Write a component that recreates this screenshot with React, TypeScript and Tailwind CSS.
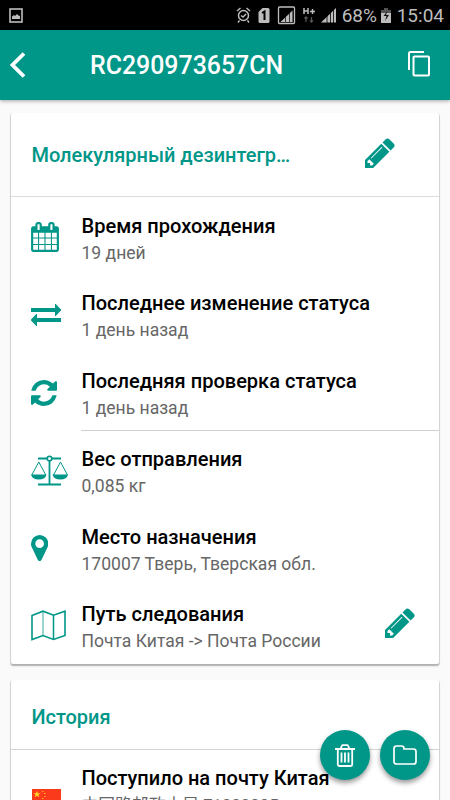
import React from 'react';

const PencilIcon = () => (
  <svg viewBox="128 128 1536 1536" className="h-[30px] w-[30px] fill-current">
    <path d="M491 1536l91-91-235-235-91 91v107h128v128h107zm523-928q0-22-22-22-10 0-17 7l-542 542q-7 7-7 17 0 22 22 22 10 0 17-7l542-542q7-7 7-17zm-54-192l416 416-832 832h-416v-416zm683 96q0 53-37 90l-166 166-416-416 166-165q36-38 90-38 53 0 91 38l235 234q37 39 37 91z" />
  </svg>
);

const CalendarIcon = () => (
  <svg viewBox="64 0 1664 1792" className="h-[30px] w-7 fill-current">
    <path d="M192 1664h288v-288h-288v288zm352 0h320v-288h-320v288zm-352-352h288v-320h-288v320zm352 0h320v-320h-320v320zm-352-384h288v-288h-288v288zm736 736h320v-288h-320v288zm-384-736h320v-288h-320v288zm768 736h288v-288h-288v288zm-384-352h320v-320h-320v320zm-352-864v-288q0-13-9.5-22.5t-22.5-9.5h-64q-13 0-22.5 9.5t-9.5 22.5v288q0 13 9.5 22.5t22.5 9.5h64q13 0 22.5-9.5t9.5-22.5zm736 864h288v-320h-288v320zm-384-384h320v-288h-320v288zm384 0h288v-288h-288v288zm32-480v-288q0-13-9.5-22.5t-22.5-9.5h-64q-13 0-22.5 9.5t-9.5 22.5v288q0 13 9.5 22.5t22.5 9.5h64q13 0 22.5-9.5t9.5-22.5zm384-64v1280q0 52-38 90t-90 38h-1408q-52 0-90-38t-38-90v-1280q0-52 38-90t90-38h128v-96q0-66 47-113t113-47h64q66 0 113 47t47 113v96h384v-96q0-66 47-113t113-47h64q66 0 113 47t47 113v96h128q52 0 90 38t38 90z" />
  </svg>
);

const ExchangeIcon = () => (
  <svg viewBox="0 0 30 24" className="h-6 w-[30px] fill-current">
    <path d="M0 5h24V1.2q0-.8.7-.3L30 6.4q.4.5 0 1l-5.3 5.5q-.7.4-.7-.4V9H0z" />
    <path d="M30 15H6v-3.8q0-.8-.7-.3L0 16.4q-.4.5 0 1l5.3 5.5q.7.4.7-.4V19h24z" />
  </svg>
);

const RefreshIcon = () => (
  <svg viewBox="128 128 1536 1536" className="mt-0.5 h-[26px] w-[26px] fill-current">
    <path d="M1639 1056q0 5-1 7-64 268-268 434.5t-478 166.5q-146 0-282.5-55t-243.5-157l-129 129q-19 19-45 19t-45-19-19-45v-448q0-26 19-45t45-19h448q26 0 45 19t19 45-19 45l-137 137q71 66 161 102t187 36q134 0 250-65t186-179q11-17 53-117 8-23 30-23h192q13 0 22.5 9.5t9.5 22.5zm25-800v448q0 26-19 45t-45 19h-448q-26 0-45-19t-19-45 19-45l138-138q-148-137-349-137-134 0-250 65t-186 179q-11 17-53 117-8 23-30 23h-199q-13 0-22.5-9.5t-9.5-22.5v-7q65-268 270-434.5t480-166.5q146 0 284 55.5t245 156.5l130-129q19-19 45-19t45 19 19 45z" />
  </svg>
);

const ScaleIcon = () => (
  <svg viewBox="0 0 37 31" className="h-[31px] w-[37px]" fill="none" stroke="currentColor">
    <path d="M7 3.5h9M21 3.5h9M18.5 6v23M7 29.5h23" strokeWidth="1.8" />
    <circle cx="18.5" cy="3.5" r="2.3" strokeWidth="1.6" />
    <path d="M.8 20L7.8 7l7 13M22.5 20l7-13 7 13" strokeWidth="1" />
    <path d="M0 19.5h15.5q-1 5-7.7 5T0 19.5zM21.5 19.5H37q-1 5-7.7 5t-7.8-5z" fill="currentColor" stroke="none" />
  </svg>
);

const MarkerIcon = () => (
  <svg viewBox="384 128 1024 1536" className="h-[26px] w-[17.3px] fill-current">
    <path d="M1152 640q0-106-75-181t-181-75-181 75-75 181 75 181 181 75 181-75 75-181zm256 0q0 109-33 179l-364 774q-16 33-47.5 52t-67.5 19-67.5-19-46.5-52l-365-774q-33-70-33-179 0-212 150-362t362-150 362 150 150 362z" />
  </svg>
);

const MapIcon = () => (
  <svg viewBox="0 0 35 31" className="h-[31px] w-[35px]" fill="none" stroke="currentColor">
    <path d="M1 5.5L12 1.2l10.5 4L34 1.2v24.3l-11.5 4-10.5-4-11 4z" strokeWidth="1.6" />
    <path d="M12 1.2v24.3" strokeWidth=".8" />
    <path d="M22.5 5v24.5" strokeWidth="1.5" />
  </svg>
);

interface Item {
  title: string;
  text: string;
  icon: React.ReactNode;
  editable?: boolean;
}

const timing: Item[] = [
  { title: 'Время прохождения', text: '19 дней', icon: <CalendarIcon /> },
  { title: 'Последнее изменение статуса', text: '1 день назад', icon: <ExchangeIcon /> },
  { title: 'Последняя проверка статуса', text: '1 день назад', icon: <RefreshIcon /> },
];

const details: Item[] = [
  { title: 'Вес отправления', text: '0,085 кг', icon: <ScaleIcon /> },
  { title: 'Место назначения', text: '170007 Тверь, Тверская обл.', icon: <MarkerIcon /> },
  { title: 'Путь следования', text: 'Почта Китая -> Почта России', icon: <MapIcon />, editable: true },
];

const Row = ({ item }: { item: Item }) => (
  <div className="flex h-[77.6px] pl-5">
    <div className="flex h-20 w-[50.5px] shrink-0 items-center">{item.icon}</div>
    <div className="min-w-0 flex-1 whitespace-nowrap pt-[15.5px]">
      <div className="text-[20.05px] font-medium leading-[27px] text-black">{item.title}</div>
      <div className="text-[17.55px] leading-[27px] text-[#666]">{item.text}</div>
    </div>
    {item.editable && (
      <div className="mr-6 flex h-[75px] items-center">
        <PencilIcon />
      </div>
    )}
  </div>
);

const StatusBar = () => (
  <div className="flex h-[30px] items-center bg-black pl-[9px] pr-[6px] text-[#bdbdbd]">
    <svg viewBox="0 0 14 15" className="h-[15px] w-3.5" fill="none" stroke="currentColor">
      <rect x="1" y="1" width="12" height="13" strokeWidth="1.6" />
      <path d="M3 11V8.5L5 7l1 1 2-2 1.5 1.5L11 8v3z" fill="currentColor" stroke="none" />
    </svg>
    <svg viewBox="0 0 110 20" className="ml-auto h-5 w-[110px] shrink-0" fill="none" stroke="currentColor">
      <circle cx="7.5" cy="10.5" r="5" strokeWidth="1.5" />
      <path d="M1 6l3.5-3M14 6l-3.5-3M3.5 15.5L2 17.5M11.5 15.5l1.5 2M5 10.5l2 1.5 3-3" strokeWidth="1.4" />
      <path d="M26.5 3H32q1.5 0 1.5 1.5v12q0 1.5-1.5 1.5h-8q-1.5 0-1.5-1.5V7z" fill="currentColor" stroke="none" />
      <path d="M26 8l2.5-1.5V15" stroke="#000" strokeWidth="2" />
      <rect x="42.5" y="2" width="16" height="16.5" rx="1" strokeWidth="1.3" />
      <path d="M44.5 17L56.5 5.5V17z" fill="currentColor" stroke="none" />
      <path d="M49.5 9v8M53.5 6v11" stroke="#000" strokeWidth=".7" />
      <path d="M68 3v6M72 3v6M68 6h4M74 6.5h5M76.5 4v5" strokeWidth="1.5" />
      <path d="M70 17v-5M68.5 13.5L70 12l1.5 1.5M75.5 12v5M74 15.5l1.5 1.5 1.5-1.5" stroke="#555" strokeWidth="1.3" />
      <path d="M85 17.5L100 3v14.5z" fill="currentColor" stroke="none" />
      <path d="M91 10v8M94.5 7v11M97.5 4v14" stroke="#000" strokeWidth=".8" />
    </svg>
    <span className="-ml-1 mt-0.5 w-[37px] shrink-0 whitespace-nowrap text-[19px]">68%</span>
    <svg viewBox="0 0 10 16" className="ml-[2px] mr-[6px] h-4 w-2.5 shrink-0">
      <path d="M3 1h4v2h3v3H0V3h3z" fill="#555" />
      <path d="M0 6h10v10H0z" fill="currentColor" />
      <path d="M6.5 4l-4 5h3l-1.5 5 4-6H5z" fill="#111" />
    </svg>
    <span className="mt-0.5 shrink-0 text-[19px]">15:04</span>
  </div>
);

const Flag = () => (
  <svg viewBox="0 0 29 20" className="h-5 w-[29px]">
    <path d="M0 0h29v20H0z" fill="#fb3a1b" />
    <path d="M5 2l1 2.2h2.5l-2 1.5.8 2.500L5 6.700 2.700 8.200l.8-2.500-2-1.500H4z" fill="#ffd326" />
    <path d="M10 2h1.500v1H10zM12 4h1.500v1H12zM12 7h1.500v1H12zM10 9h1.500v1H10z" fill="#ffb020" />
  </svg>
);

const card = 'overflow-hidden rounded-[2px] bg-white shadow-[0_1px_0_1px_rgba(0,0,0,0.1),0_2px_2px_rgba(0,0,0,0.22)]';

const App: React.FC = () => {
  return (
    <div className="relative h-[800px] w-[450px] overflow-hidden bg-[#fafafa] font-['Roboto','Noto_Sans_CJK_SC',sans-serif] text-[#009688]">
      <StatusBar />

      {/* Toolbar */}
      <header className="flex h-[70px] items-center bg-[#009688] text-white shadow-[0_1px_4px_rgba(0,0,0,0.35)]">
        <svg viewBox="0 0 16 26" className="ml-[10px] h-[26px] w-4" fill="none" stroke="currentColor" strokeWidth="3.8">
          <path d="M14 1.5L2.5 13 14 24.5" />
        </svg>
        <h1 className="ml-[64px] mt-px text-[24.9px] font-medium">RC290973657CN</h1>
        <svg viewBox="0 0 24 27" className="-mt-1 ml-auto mr-[19px] h-[27px] w-6" fill="none" stroke="currentColor" strokeWidth="2">
          <path d="M2 20V3.5Q2 2 3.5 2H17" />
          <rect x="6.5" y="6.5" width="15.5" height="19" rx="1" />
        </svg>
      </header>

      <main className="flex flex-col gap-4 px-[11px] pt-[13px]">
        <section className={card}>
          <div className="flex h-[84px] items-center border-b border-[#dcdcdc] pl-[20.4px] pr-11">
            <h2 className="whitespace-nowrap text-[20px] font-medium">Молекулярный дезинтегр…</h2>
            <div className="ml-auto -mt-1">
              <PencilIcon />
            </div>
          </div>
          {timing.map((item) => (
            <Row key={item.title} item={item} />
          ))}
          <div className="ml-[70px] h-px bg-[#d0d0d0]" />
          {details.map((item) => (
            <Row key={item.title} item={item} />
          ))}
        </section>

        <section className={card}>
          <div className="flex h-[70px] items-center border-b border-[#d4d4d4] pl-[20.4px] pt-[5px]">
            <h2 className="text-[20px] font-medium">История</h2>
          </div>
          <div className="flex pl-[21px]">
            <div className="w-[49.5px] shrink-0 pt-[39px]">
              <Flag />
            </div>
            <div className="whitespace-nowrap pt-[15.5px]">
              <div className="text-[20px] font-medium leading-[27px] text-black">Поступило на почту Китая</div>
              <div className="text-[16.8px] leading-[27px] text-[#666]">中国路邮政本局 71000005</div>
            </div>
          </div>
        </section>
      </main>

      {/* Floating buttons */}
      <div className="absolute bottom-5 right-5 flex gap-2.5 text-white">
        <button className="flex h-[50px] w-[50px] items-center justify-center rounded-full bg-[#009688] shadow-[0_3px_5px_rgba(0,0,0,0.4)]">
          <svg viewBox="0 0 20 23" className="mt-px h-[23px] w-5" fill="none" stroke="currentColor" strokeWidth="1.8">
            <path d="M0 5h20M2.8 5v15.5q0 1.5 1.5 1.5h11.4q1.5 0 1.5-1.5V5M5.5 5l1.3-3q.3-.8 1.2-.8h4q.9 0 1.2.8l1.3 3" />
            <path d="M6.5 8.500v10M10 8.500v10M13.500 8.500v10" />
          </svg>
        </button>
        <button className="flex h-[50px] w-[50px] items-center justify-center rounded-full bg-[#009688] shadow-[0_3px_5px_rgba(0,0,0,0.4)]">
          <svg viewBox="0 0 24 20" className="h-5 w-6" fill="none" stroke="currentColor" strokeWidth="1.7">
            <path d="M1 3.5Q1 1 3.5 1h5Q11 1 11 3.5V4h9.500Q23 4 23 6.500v10q0 2.500-2.500 2.500h-17Q1 19 1 16.500z" />
          </svg>
        </button>
      </div>
    </div>
  );
};

export default App;
